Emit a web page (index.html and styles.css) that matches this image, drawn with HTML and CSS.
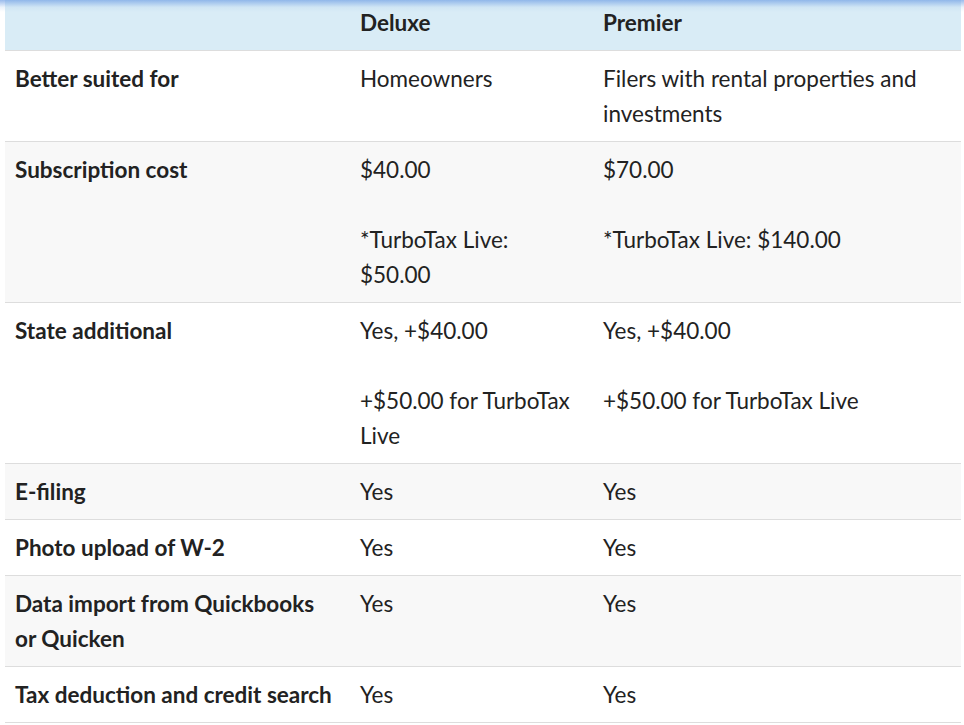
FILE: index.html
```html
<!DOCTYPE html>
<html>
<head>
<meta charset="utf-8">
<link rel="stylesheet" href="styles.css">
</head>
<body>
<div class="wrap">
<table class="cmp">
<colgroup><col class="c1"><col class="c2"><col class="c3"></colgroup>
<thead>
<tr><th></th><th>Deluxe</th><th>Premier</th></tr>
</thead>
<tbody>
<tr><td class="lbl">Better suited for</td><td>Homeowners</td><td>Filers with rental properties and investments</td></tr>
<tr><td class="lbl">Subscription cost</td><td>$40.00<br><br>*TurboTax Live: $50.00</td><td>$70.00<br><br>*TurboTax Live: $140.00</td></tr>
<tr><td class="lbl">State additional</td><td>Yes, +$40.00<br><br>+$50.00 for TurboTax Live</td><td>Yes, +$40.00<br><br>+$50.00 for TurboTax Live</td></tr>
<tr><td class="lbl">E-filing</td><td>Yes</td><td>Yes</td></tr>
<tr><td class="lbl">Photo upload of W-2</td><td>Yes</td><td>Yes</td></tr>
<tr><td class="lbl">Data import from Quickbooks or Quicken</td><td>Yes</td><td>Yes</td></tr>
<tr><td class="lbl">Tax deduction and credit search</td><td>Yes</td><td>Yes</td></tr>
</tbody>
</table>
</div>
</body>
</html>
```
FILE: styles.css
```css
html, body {
  margin: 0;
  padding: 0;
  background: #ffffff;
}
body {
  font-family: Lato, "Open Sans", sans-serif;
  color: #222222;
  overflow: hidden;
}
.wrap {
  position: relative;
  padding: 0 3px 0 5px;
  margin-top: -6px;
}
.wrap::before {
  content: "";
  position: absolute;
  left: 0;
  right: 0;
  top: 6px;
  height: 12px;
  background: linear-gradient(to bottom, rgba(120,165,230,0.75), rgba(180,210,240,0.25) 60%, rgba(200,225,245,0));
  pointer-events: none;
}
.cmp {
  width: 956px;
  border-collapse: collapse;
  table-layout: fixed;
  font-size: 22.5px;
  line-height: 35px;
}
.c1 { width: 345px; }
.c2 { width: 243px; }
.c3 { width: 368px; }
.cmp th, .cmp td {
  text-align: left;
  vertical-align: top;
  padding: 10px 10px 10px 10px;
  border-bottom: 1px solid #dddddd;
}
.cmp th {
  background: #d9ecf6;
  font-weight: 700;
  padding-top: 11px;
}
.cmp td {
  font-weight: 400;
}
.cmp td.lbl {
  font-weight: 700;
}
.cmp tbody tr:nth-child(even) td {
  background: #f8f8f8;
}
```
